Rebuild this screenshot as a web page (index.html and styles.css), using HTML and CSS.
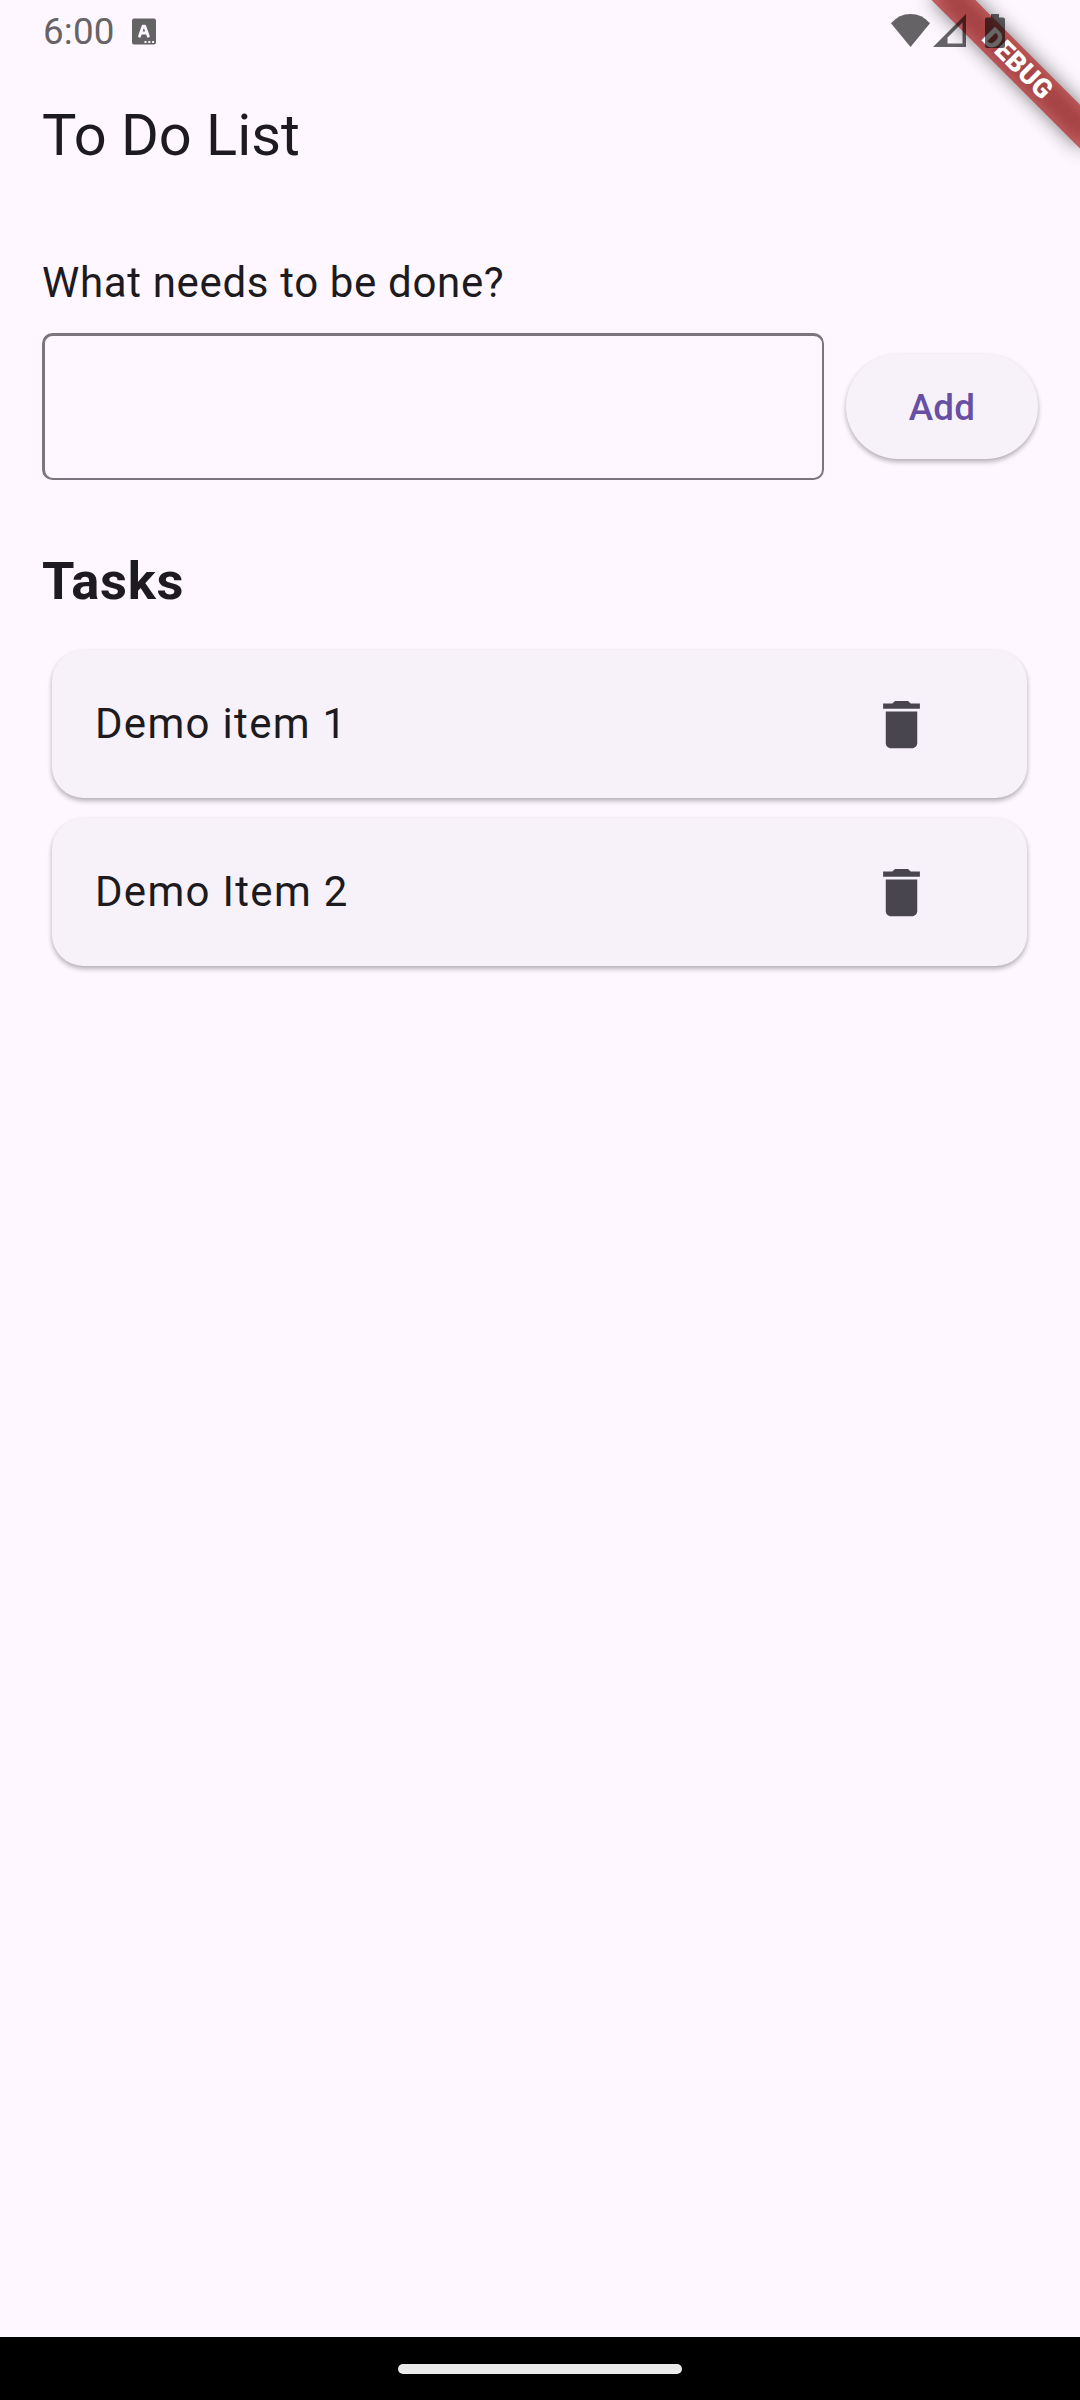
FILE: index.html
```html
<!DOCTYPE html>
<html lang="en">
<head>
<meta charset="utf-8">
<title>To Do List</title>
<link rel="stylesheet" href="styles.css">
</head>
<body>
<div class="screen">
  <div class="banner">
    <div class="banner-shadow"></div>
    <div class="banner-band">DEBUG</div>
  </div>
  <div class="status">
    <span class="clock">6:00</span>
    <svg class="notice" width="24" height="27" viewBox="0 0 24 27"><path fill-rule="evenodd" d="M2 .5h20q2 0 2 2v22q0 2-2 2H2q-2 0-2-2v-22q0-2 2-2zM12.500 23v2h2v-2zm3.800 0v2h2v-2zm3.800 0v2h2v-2z"/><path class="mark" d="M7.500 18.200L11 8.200h1.800L16.300 18.200M9 15h5.800"/></svg>
    <div class="signals">
      <svg width="39" height="33" viewBox="0 0 39 33"><path d="M0 9.300Q8 0 19.500 0T39 9.300L19.500 33z"/></svg>
      <svg class="cell" width="33" height="33" viewBox="0 0 33 33"><path fill-rule="evenodd" d="M33 0v33H0zM29.500 8.500L14.500 23.500v6h15z"/></svg>
      <svg class="battery" width="20" height="34" viewBox="0 0 20 34"><path d="M6 0h8v3.500h4q2 0 2 2V32q0 2-2 2H2q-2 0-2-2V5.500q0-2 2-2h4z"/></svg>
    </div>
  </div>
  <header class="appbar"><h1>To Do List</h1></header>
  <main class="content">
    <label class="prompt" for="task">What needs to be done?</label>
    <div class="entry">
      <input class="field" id="task" type="text">
      <button class="add" type="button">Add</button>
    </div>
    <h2>Tasks</h2>
    <ul class="tasks">
      <li class="card"><span>Demo item 1</span><svg class="trash" viewBox="0 0 24 24"><path d="M6 19c0 1.100.9 2 2 2h8c1.100 0 2-.9 2-2V7H6v12zM19 4h-3.500l-1-1h-5l-1 1H5v2h14V4z"/></svg></li>
      <li class="card"><span>Demo Item 2</span><svg class="trash" viewBox="0 0 24 24"><path d="M6 19c0 1.100.9 2 2 2h8c1.100 0 2-.9 2-2V7H6v12zM19 4h-3.500l-1-1h-5l-1 1H5v2h14V4z"/></svg></li>
    </ul>
  </main>
  <nav class="navbar"><div class="pill"></div></nav>
</div>
</body>
</html>
```
FILE: styles.css
```css
* { box-sizing: border-box; }
body { margin: 0; }
.screen {
  position: relative;
  display: flex;
  flex-direction: column;
  width: 1080px;
  height: 2400px;
  overflow: hidden;
  background: #fef7ff;
  color: #1d1b20;
  font-family: Roboto, sans-serif;
}
.status {
  position: relative;
  z-index: 2;
  display: flex;
  align-items: flex-start;
  height: 63px;
  padding: 0 75px 0 43px;
}
.clock {
  width: 89px;
  font-size: 36.75px;
  line-height: 64px;
  letter-spacing: .2px;
  color: #666367;
}
.status svg { fill: rgba(0, 0, 0, .6); }
.status .notice { margin-top: 18px; }
.status .mark { fill: none; stroke: #fef7ff; stroke-width: 2.8; stroke-linecap: round; stroke-linejoin: round; }
.signals { display: flex; margin: 14px 0 0 auto; }
.cell { margin-left: 3px; }
.battery { margin-left: 19px; }
.banner {
  position: absolute;
  top: 0;
  left: 1080px;
  z-index: 1;
  transform: rotate(45deg);
  transform-origin: 0 0;
}
.banner-shadow, .banner-band {
  position: absolute;
  top: 73.5px;
  left: -105px;
  width: 210px;
  height: 31.5px;
}
.banner-shadow { background: rgba(0, 0, 0, .5); filter: blur(9.600px); }
.banner-band {
  padding-left: 2px;
  background: rgba(183, 28, 28, .63);
  color: #fff;
  font-size: 26.8px;
  font-weight: 900;
  line-height: 31.5px;
  letter-spacing: .3px;
  text-align: center;
}
.appbar { display: flex; align-items: center; height: 147px; padding: 0 42px 2px; }
h1 { margin: 0; font-size: 57.75px; font-weight: 400; line-height: 73px; }
.content { display: flex; flex: 1; flex-direction: column; padding: 42px 42px 0; }
.prompt { height: 81px; font-size: 42px; line-height: 62px; letter-spacing: .66px; }
.entry { display: flex; align-items: center; justify-content: space-between; height: 147px; }
.field {
  width: 782px;
  height: 147px;
  padding: 0 32px;
  border: solid #7a757f;
  border-width: 3px 2px 2px 3px;
  border-radius: 10.500px;
  background: transparent;
  font: 42px Roboto, sans-serif;
}
.add {
  width: 192px;
  height: 105px;
  padding: 2px 0 0;
  border: 0;
  border-radius: 53px;
  background: #f7f2fa;
  box-shadow: 0 3px 5px rgba(0, 0, 0, .24), 0 2px 5px rgba(0, 0, 0, .08);
  color: #6750a4;
  font: 500 36.75px Roboto, sans-serif;
  letter-spacing: .26px;
}
h2 { margin: 68px 0 0; font-size: 52.5px; font-weight: 700; line-height: 66px; letter-spacing: .66px; }
.tasks { display: flex; flex-direction: column; gap: 20px; margin: 36px 11px 0 10px; padding: 0; list-style: none; }
.card {
  display: flex;
  align-items: center;
  justify-content: space-between;
  height: 148px;
  padding: 0 94px 0 43px;
  border-radius: 31.5px;
  background: #f7f2fa;
  box-shadow: 0 3px 5px rgba(0, 0, 0, .24), 0 2px 5px rgba(0, 0, 0, .08);
  font-size: 42px;
  letter-spacing: 1.31px;
}
.card span { padding-bottom: 1px; }
.trash { width: 63px; height: 63px; fill: #49454f; }
.navbar { display: flex; justify-content: center; height: 63px; padding-top: 27px; background: #000; }
.pill { width: 284px; height: 10px; border-radius: 5px; background: #ebebeb; }
```
